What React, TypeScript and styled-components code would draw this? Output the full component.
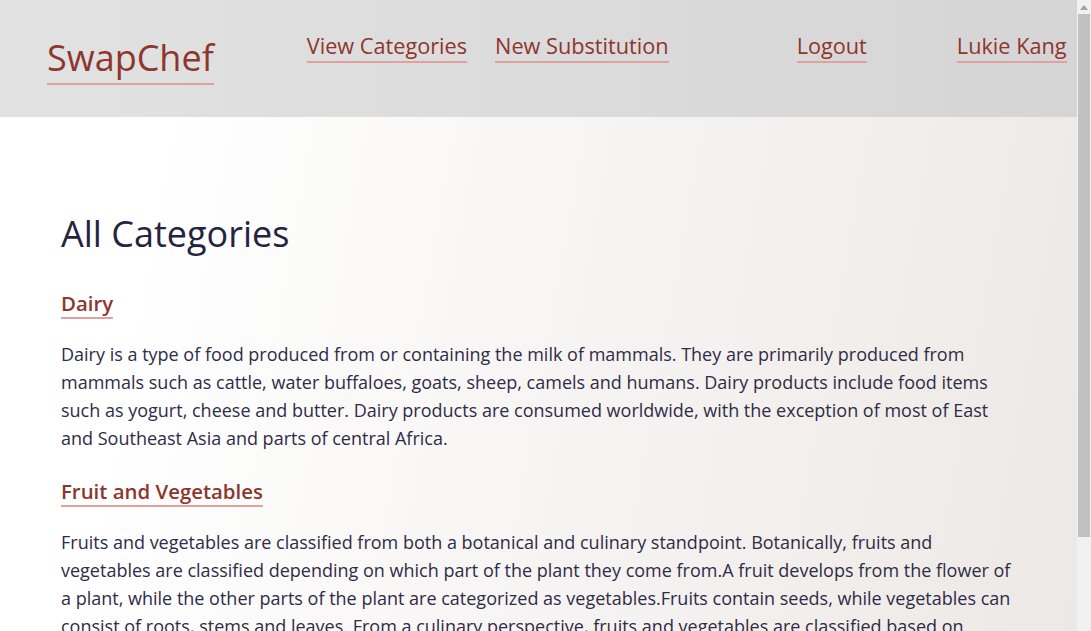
import * as React from 'react';
import styled, { createGlobalStyle } from 'styled-components';

const GlobalStyles = createGlobalStyle`
  html, body {
    margin: 0;
    padding: 0;
    overflow: hidden;
  }
  body {
    font-family: 'Open Sans', 'Noto Sans', sans-serif;
  }
  * {
    box-sizing: border-box;
  }
`;

const Window = styled.div`
  display: flex;
  height: 100vh;
  overflow: hidden;
`;

const Page = styled.div`
  flex: 1;
  min-width: 0;
  overflow: hidden;
  background: linear-gradient(100deg, #ffffff 15%, #ece8e5 100%);
`;

const ScrollTrack = styled.div`
  width: 14px;
  flex-shrink: 0;
  display: flex;
  flex-direction: column;
  background: #f1f1f1;
`;

const ScrollArrow = styled.div`
  height: 14px;
  display: flex;
  align-items: center;
  justify-content: center;
  svg {
    display: block;
  }
`;

const ScrollThumb = styled.div`
  height: 523px;
  margin: 0 1px;
  background: #c1c1c1;
`;

const Header = styled.header`
  height: 117px;
  display: flex;
  align-items: flex-start;
  padding: 31px 10px 0 47px;
  background: linear-gradient(90deg, #e2e2e2 0%, #d6d5d5 100%);
`;

const Logo = styled.a`
  margin-top: 2px;
  font-size: 36px;
  line-height: normal;
  color: #8e352d;
  text-decoration: none;
  padding-bottom: 1px;
  border-bottom: 2px solid #e1a19e;
`;

const NavLink = styled.a<{ gap: number }>`
  margin-left: ${(p) => p.gap}px;
  font-size: 21.7px;
  line-height: normal;
  color: #8e352d;
  text-decoration: none;
  padding-bottom: 1px;
  border-bottom: 2px solid #e1a19e;
  white-space: nowrap;
`;

const Main = styled.main`
  padding: 92px 61px 44px;
`;

const Title = styled.h1`
  margin: 0 0 31px;
  font-size: 36px;
  font-weight: 400;
  line-height: normal;
  color: #25233f;
`;

const Category = styled.section`
  & + & {
    margin-top: 25px;
  }
`;

const CategoryName = styled.h2`
  display: inline-block;
  margin: 0;
  font-size: 20.4px;
  font-weight: 600;
  line-height: normal;
  color: #8e352d;
  border-bottom: 2px solid #e1a19e;
`;

const Description = styled.p`
  margin: 21px 0 0;
  font-size: 18px;
  line-height: 28px;
  color: #2f2c47;
`;

const categories = [
  {
    name: 'Dairy',
    text: 'Dairy is a type of food produced from or containing the milk of mammals. They are primarily produced from mammals such as cattle, water buffaloes, goats, sheep, camels and humans. Dairy products include food items such as yogurt, cheese and butter. Dairy products are consumed worldwide, with the exception of most of East and Southeast Asia and parts of central Africa.',
  },
  {
    name: 'Fruit and Vegetables',
    text: 'Fruits and vegetables are classified from both a botanical and culinary standpoint. Botanically, fruits and vegetables are classified depending on which part of the plant they come from.A fruit develops from the flower of a plant, while the other parts of the plant are categorized as vegetables.Fruits contain seeds, while vegetables can consist of roots, stems and leaves. From a culinary perspective, fruits and vegetables are classified based on flavour and how they are used in cooking.',
  },
];

const App: React.FC = () => (
  <Window>
    <GlobalStyles />
    <Page>
      <Header>
        <Logo href="#">SwapChef</Logo>
        <NavLink href="#" gap={93}>View Categories</NavLink>
        <NavLink href="#" gap={28}>New Substitution</NavLink>
        <NavLink href="#" gap={128}>Logout</NavLink>
        <NavLink href="#" gap={90}>Lukie Kang</NavLink>
      </Header>
      <Main>
        <Title>All Categories</Title>
        {categories.map((c) => (
          <Category key={c.name}>
            <CategoryName>{c.name}</CategoryName>
            <Description>{c.text}</Description>
          </Category>
        ))}
      </Main>
    </Page>
    <ScrollTrack>
      <ScrollArrow>
        <svg width="8" height="5" viewBox="0 0 8 5">
          <path d="M0 5 L4 0 L8 5 Z" fill="#a3a3a3" />
        </svg>
      </ScrollArrow>
      <ScrollThumb />
    </ScrollTrack>
  </Window>
);

export default App;
